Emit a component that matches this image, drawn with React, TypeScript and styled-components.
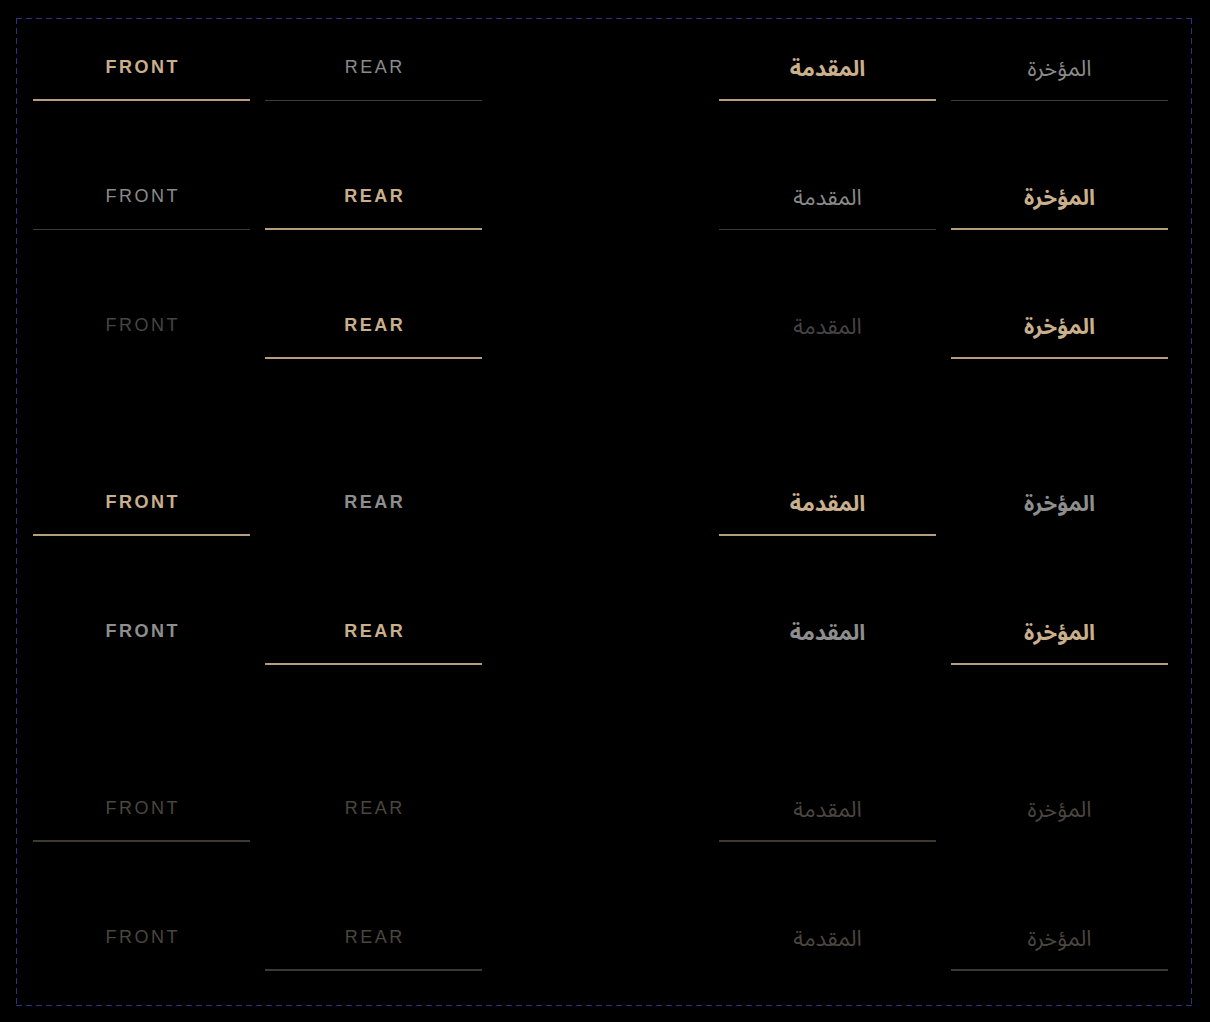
import React from "react";
import styled, { createGlobalStyle, css } from "styled-components";

const GlobalStyle = createGlobalStyle`
  html, body {
    margin: 0;
    background: #000;
  }
  body {
    font-family: "Liberation Sans", Arial, sans-serif;
  }
`;

type Variant = "lined" | "plain" | "strong" | "muted";

interface TabRowSpec {
  variant: Variant;
  active: number;
  disabledIndex?: number;
}

const GOLD = "#caaf8c";
const GOLD_LINE = "#b69d7d";
const DASH = "#342e80";

const Page = styled.div`
  padding: 18px 18px 15px 16px;
`;

// dashed frame drawn with gradients so the dash length can be set (6px on, 4px off)
const Frame = styled.div`
  padding: 17px 24px 35px 17px;
  display: flex;
  flex-direction: column;
  gap: 111px;
  background:
    linear-gradient(90deg, ${DASH} 60%, transparent 0) top left / 10px 1px repeat-x,
    linear-gradient(90deg, ${DASH} 60%, transparent 0) bottom left / 10px 1px repeat-x,
    linear-gradient(180deg, ${DASH} 60%, transparent 0) top left / 1px 10px repeat-y,
    linear-gradient(180deg, ${DASH} 60%, transparent 0) top right / 1px 10px repeat-y;
`;

const Section = styled.section`
  display: flex;
  flex-direction: column;
  gap: 63px;
`;

const Row = styled.div`
  display: flex;
  justify-content: space-between;
`;

const TabList = styled.div`
  display: flex;
  gap: 15px;
`;

const Tab = styled.button<{
  $active: boolean;
  $variant: Variant;
  $disabled: boolean;
  $arabic: boolean;
}>`
  width: 217px;
  height: 66px;
  box-sizing: border-box;
  display: flex;
  align-items: center;
  justify-content: center;
  padding: ${(p) => (p.$arabic ? "3px 0 0" : "0")};
  background: none;
  border: none;
  border-bottom: 1px solid transparent;
  font-family: ${(p) =>
    p.$arabic
      ? `"Noto Sans Arabic", "DejaVu Sans", sans-serif`
      : `"Liberation Sans", Arial, sans-serif`};
  font-size: ${(p) => (p.$arabic ? "22px" : "18px")};
  letter-spacing: ${(p) => (p.$arabic ? "0" : "2.5px")};
  text-indent: ${(p) => (p.$arabic ? "0" : "2.5px")};
  font-weight: 400;
  color: #8b8b8b;
  cursor: pointer;

  ${(p) => p.$variant === "lined" && css`border-bottom-color: #3b3b3b;`}
  ${(p) => p.$variant === "strong" && css`font-weight: 700; color: #8e8e8e;`}
  ${(p) => p.$disabled && css`color: #454545; cursor: default;`}

  ${(p) =>
    p.$active &&
    css`
      font-weight: 700;
      color: ${GOLD};
      border-bottom: 2px solid ${GOLD_LINE};
    `}

  ${(p) =>
    p.$variant === "muted" &&
    css`
      font-weight: 400;
      color: #4b463f;
      cursor: default;
      border-bottom-color: ${p.$active ? "#3e3a33" : "transparent"};
    `}
`;

const latin = ["FRONT", "REAR"];
const arabic = ["المقدمة", "المؤخرة"];

const sections: TabRowSpec[][] = [
  [
    { variant: "lined", active: 0 },
    { variant: "lined", active: 1 },
    { variant: "plain", active: 1, disabledIndex: 0 },
  ],
  [
    { variant: "strong", active: 0 },
    { variant: "strong", active: 1 },
  ],
  [
    { variant: "muted", active: 0 },
    { variant: "muted", active: 1 },
  ],
];

const Tabs = ({ labels, spec, rtl }: { labels: string[]; spec: TabRowSpec; rtl: boolean }) => (
  <TabList role="tablist">
    {labels.map((label, i) => (
      <Tab
        key={label}
        role="tab"
        lang={rtl ? "ar" : "en"}
        aria-selected={spec.active === i}
        disabled={spec.disabledIndex === i || spec.variant === "muted"}
        $active={spec.active === i}
        $variant={spec.variant}
        $disabled={spec.disabledIndex === i}
        $arabic={rtl}
      >
        {label}
      </Tab>
    ))}
  </TabList>
);

export default function App() {
  return (
    <Page>
      <GlobalStyle />
      <Frame>
        {sections.map((rows, s) => (
          <Section key={s}>
            {rows.map((spec, r) => (
              <Row key={r}>
                <Tabs labels={latin} spec={spec} rtl={false} />
                <Tabs labels={arabic} spec={spec} rtl />
              </Row>
            ))}
          </Section>
        ))}
      </Frame>
    </Page>
  );
}
